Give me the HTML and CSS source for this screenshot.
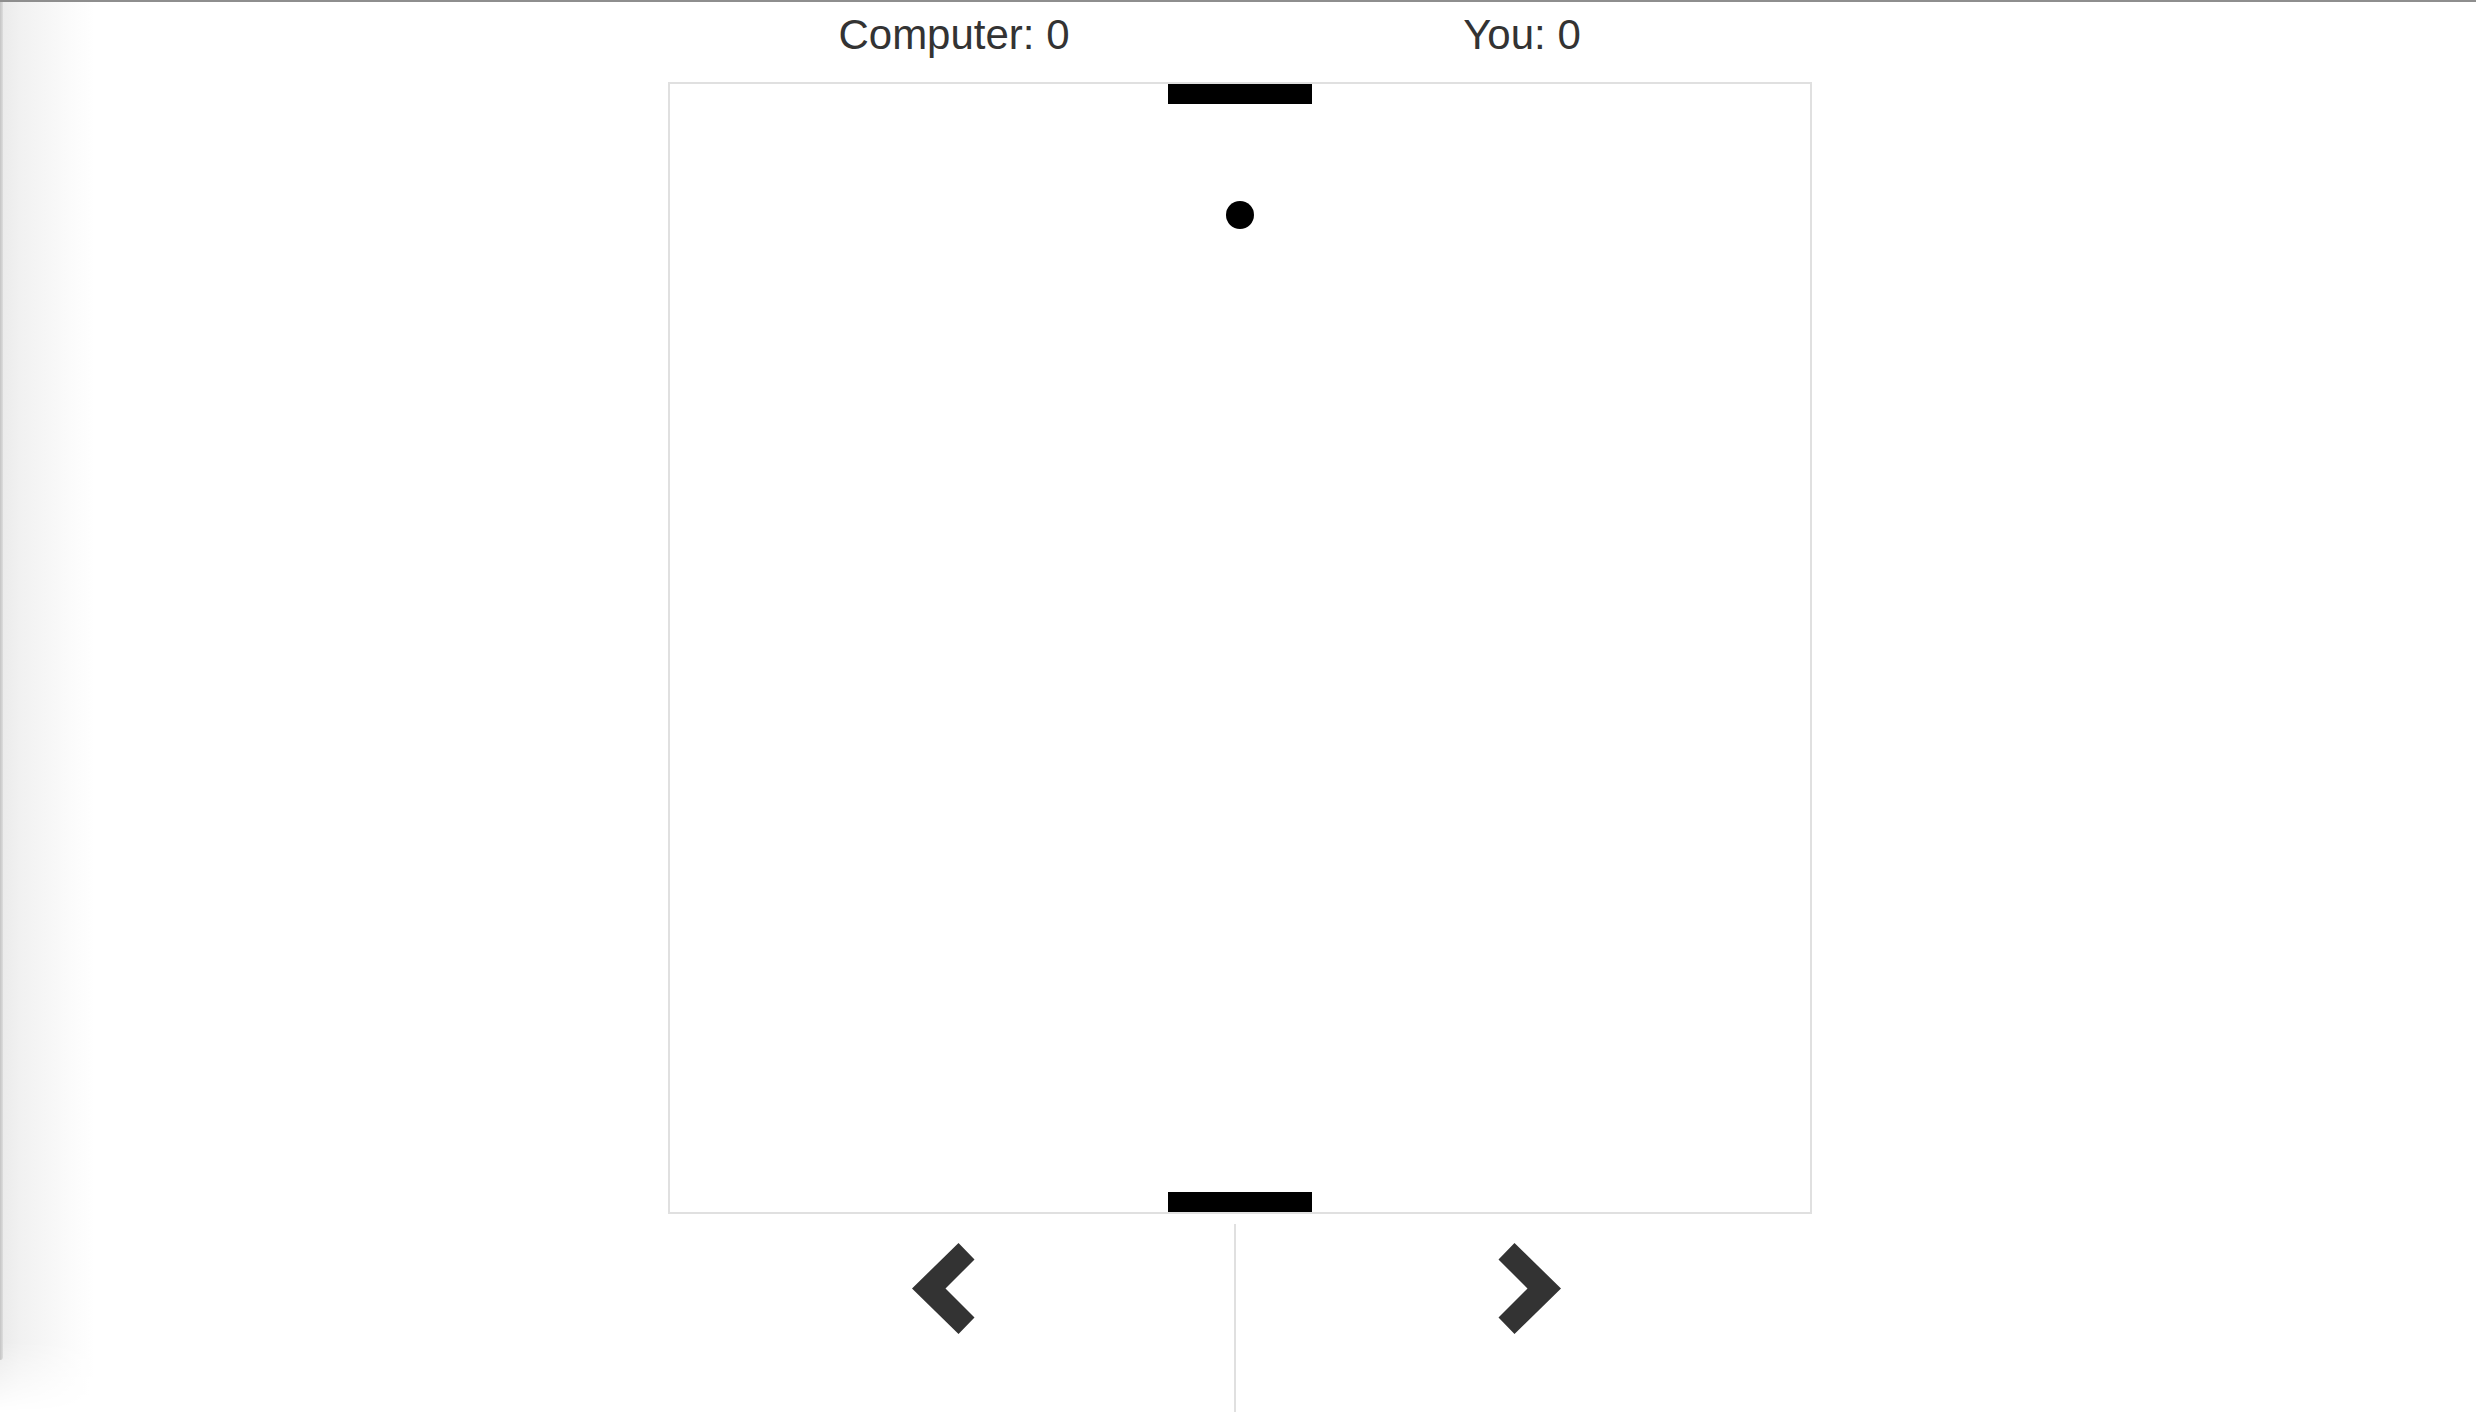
FILE: index.html
```html
<!DOCTYPE html>
<html lang="en">
<head>
<meta charset="utf-8">
<title>Pong</title>
<link rel="stylesheet" href="styles.css">
</head>
<body>
<div class="frame-shadow"></div>
<div class="frame-edge"></div>
<div class="page">
  <div class="game">
    <div class="scores">
      <div class="score">Computer: 0</div>
      <div class="score score-you">You: 0</div>
    </div>
    <div class="board">
      <div class="paddle paddle-top"></div>
      <div class="ball"></div>
      <div class="paddle paddle-bottom"></div>
    </div>
    <div class="controls">
      <div class="control control-left">
        <svg class="chevron" width="80" height="92" viewBox="0 0 80 92" aria-label="left">
          <polygon points="47.5,0 1,45.5 47.5,91 63.5,74.5 34.5,45.5 63.5,16.5" fill="#333"/>
        </svg>
      </div>
      <div class="control control-right">
        <svg class="chevron" width="80" height="92" viewBox="0 0 80 92" aria-label="right">
          <polygon points="30.5,0 77,45.5 30.5,91 14.5,74.5 43.5,45.5 14.5,16.5" fill="#333"/>
        </svg>
      </div>
    </div>
  </div>
</div>
</body>
</html>
```
FILE: styles.css
```css
html, body {
  margin: 0;
  padding: 0;
  background: #fff;
  height: 100%;
  overflow: hidden;
}

body {
  font-family: "Liberation Sans", Arial, Helvetica, sans-serif;
  color: #333;
}

.page {
  border-top: 2px solid #8e8e8e;
  padding-left: 4px;
  height: 1410px;
  box-sizing: border-box;
}

.frame-shadow {
  position: fixed;
  left: 0;
  top: 2px;
  width: 95px;
  height: 1410px;
  background: linear-gradient(to right, #eaeaea 0, #f1f1f1 20px, #f6f6f6 45px, #fbfbfb 70px, #fff 95px);
  -webkit-mask-image: linear-gradient(to bottom, #000 1340px, transparent 1410px);
  mask-image: linear-gradient(to bottom, #000 1340px, transparent 1410px);
  pointer-events: none;
}

.frame-edge {
  position: fixed;
  left: 0;
  top: 2px;
  width: 3px;
  height: 1358px;
  background: linear-gradient(to right, #c4c4c4, #dedede);
  border-bottom-right-radius: 3px;
  pointer-events: none;
}

.game {
  width: 1144px;
  margin: 0 auto;
}

.scores {
  display: flex;
  height: 80px;
  padding-top: 9px;
  box-sizing: border-box;
}

.score {
  flex: 0 0 50%;
  box-sizing: border-box;
  text-align: center;
  font-size: 42px;
  line-height: 48px;
  color: #333;
}

.score-you {
  padding-right: 8px;
}

.board {
  position: relative;
  width: 1140px;
  height: 1128px;
  border: 2px solid #e0e0e0;
  background: #fff;
}

.paddle {
  position: absolute;
  left: 498px;
  width: 144px;
  height: 20px;
  background: #000;
}

.paddle-top {
  top: 0;
}

.paddle-bottom {
  bottom: 0;
}

.ball {
  position: absolute;
  left: 556px;
  top: 117px;
  width: 28px;
  height: 28px;
  border-radius: 50%;
  background: #000;
}

.controls {
  display: flex;
  margin-top: 10px;
  height: 188px;
}

.control {
  display: flex;
  justify-content: center;
  align-items: flex-start;
  padding-top: 19px;
  box-sizing: border-box;
}

.control-left {
  width: 568px;
  border-right: 2px solid #e0e0e0;
}

.control-right {
  flex: 1;
}

.chevron {
  display: block;
}
```
